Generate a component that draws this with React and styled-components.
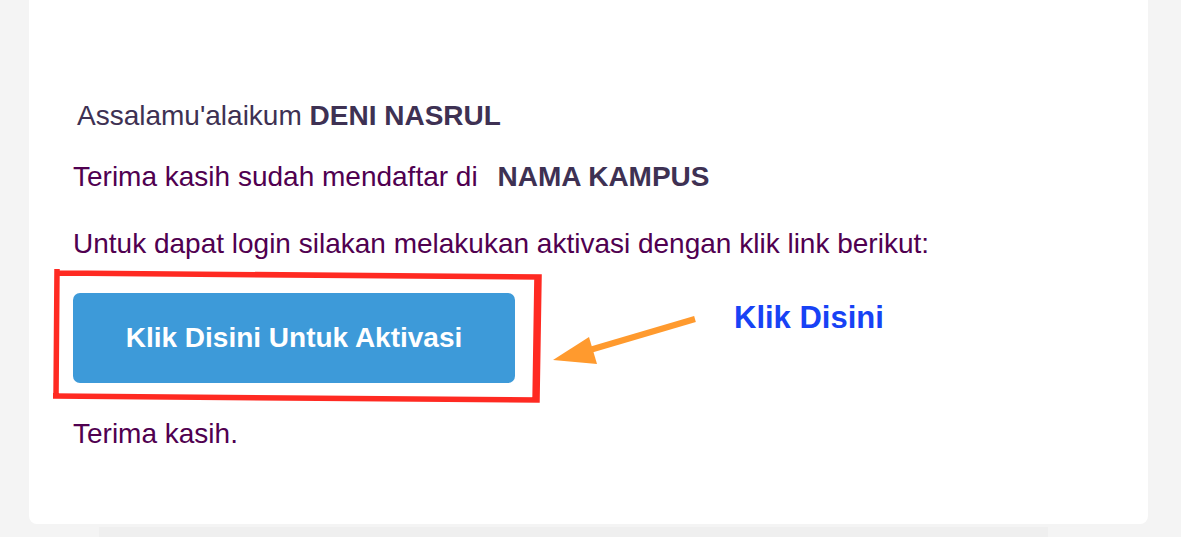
import React from "react";
import styled, { createGlobalStyle } from "styled-components";

const GlobalStyle = createGlobalStyle`
	html, body {
		margin: 0;
		padding: 0;
		background: #f4f4f4;
		font-family: "Liberation Sans", Arial, Helvetica, sans-serif;
	}
`;

const Page = styled.div`
	width: 1181px;
	height: 537px;
	overflow: hidden;
	display: flex;
	flex-direction: column;
	align-items: flex-start;
`;

const Card = styled.section`
	margin-left: 29px;
	width: 1119px;
	height: 524px;
	box-sizing: border-box;
	background: #ffffff;
	border-radius: 0 0 8px 8px;
	padding: 101px 0 0 44px;
`;

const Footer = styled.div`
	margin: 3px 0 0 99px;
	width: 949px;
	height: 10px;
	background: #efefef;
`;

const Line = styled.p`
	margin: 0 0 ${(p) => p.$gap || 0}px ${(p) => p.$indent || 0}px;
	font-size: 28px;
	line-height: 30px;
	color: ${(p) => p.$color || "#500050"};
`;

const Strong = styled.b`
	font-weight: 700;
	color: #3e3153;
	padding-left: ${(p) => p.$pad || 0}px;
`;

const ButtonArea = styled.div`
	position: relative;
	margin: 34px 0 36px;
	width: 442px;
`;

const ActivateButton = styled.a`
	display: flex;
	align-items: center;
	justify-content: center;
	height: 90px;
	border-radius: 7px;
	background: #3d9ad9;
	color: #ffffff;
	font-size: 28px;
	font-weight: 700;
	text-decoration: none;
`;

const Marks = styled.svg`
	position: absolute;
	left: -20px;
	top: -26px;
	overflow: visible;
	pointer-events: none;
`;

const Hint = styled.span`
	position: absolute;
	left: 661px;
	top: 7px;
	font-size: 31px;
	font-weight: 700;
	color: #1742f5;
	white-space: nowrap;
`;

const App = () => {
	return (
		<>
			<GlobalStyle />
			<Page>
				<Card>
					<Line $color='#3e3153' $indent={4} $gap={31}>
						Assalamu'alaikum <Strong>DENI NASRUL</Strong>
					</Line>
					<Line $gap={37}>
						Terima kasih sudah mendaftar di <Strong $pad={12}>NAMA KAMPUS</Strong>
					</Line>
					<Line>
						Untuk dapat login silakan melakukan aktivasi dengan klik link berikut:
					</Line>

					<ButtonArea>
						<ActivateButton href='#'>Klik Disini Untuk Aktivasi</ActivateButton>
						{/* hand-drawn annotations: red frame and arrow */}
						<Marks width='700' height='140'>
							<path
								d='M6 6 L486 10 L484 133 L0 129 M4 2 L3 131 M484 8 L482 135'
								fill='none'
								stroke='#ff2a22'
								strokeWidth='5.5'
								strokeLinejoin='miter'
							/>
							<path d='M642 52 L530 85' stroke='#ff9a2e' strokeWidth='6' strokeLinecap='butt' />
							<path d='M500 93 L536 70 L544 97 Z' fill='#ff9a2e' />
						</Marks>
						<Hint>Klik Disini</Hint>
					</ButtonArea>

					<Line>Terima kasih.</Line>
				</Card>
				<Footer />
			</Page>
		</>
	);
};

export default App;
